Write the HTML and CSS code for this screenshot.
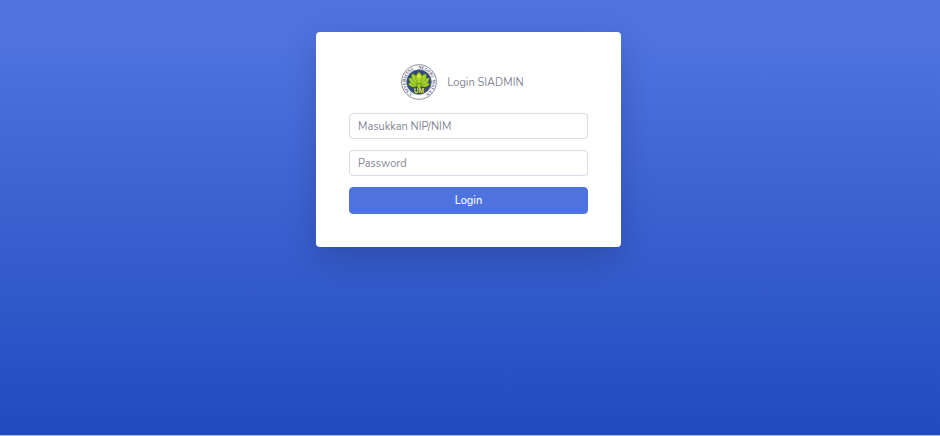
FILE: index.html
```html
<!DOCTYPE html>
<html lang="id">
<head>
<meta charset="utf-8">
<meta name="viewport" content="width=device-width, initial-scale=1">
<title>Login SIADMIN</title>
<link rel="stylesheet" href="styles.css">
</head>
<body>
<main class="card">
  <header class="brand">
    <svg class="logo" viewBox="0 0 108 108" aria-hidden="true">
      <defs><path id="ring" d="M34 89A40 40 0 1 1 74 89"/></defs>
      <circle cx="54" cy="54" r="52" fill="#fff" stroke="#73798a" stroke-width="2.5"/>
      <text class="seal"><textPath href="#ring" startOffset="0">UNIVERSITAS</textPath></text>
      <text class="seal"><textPath href="#ring" startOffset="102">NEGERI</textPath></text>
      <text class="seal"><textPath href="#ring" startOffset="160">MALANG</textPath></text>
      <circle cx="54" cy="54" r="37" fill="#344a78" stroke="#53617e" stroke-width="2"/>
      <g fill="#a9d52b" stroke="#53751f" stroke-width="1.5">
        <path d="M49 66C39 72 27 69 22 59C31 53 42 55 50 63Z"/>
        <path d="M59 66C69 72 81 69 86 59C77 53 66 55 58 63Z"/>
        <path d="M50 63C35 65 24 54 23 43C37 39 48 48 53 62Z"/>
        <path d="M58 63C73 65 84 54 85 43C71 39 60 48 55 62Z"/>
        <path d="M52 61C35 55 29 42 33 29C47 32 54 44 54 59Z"/>
        <path d="M56 61C73 55 79 42 75 29C61 32 54 44 54 59Z"/>
        <path d="M54 61C41 48 41 34 54 24C67 34 67 48 54 61Z"/>
        <path d="M47 60H61L58 73H50Z"/>
      </g>
      <circle cx="54" cy="37" r="5" fill="#e5ed39"/>
      <text class="monogram" x="54" y="87">UM</text>
    </svg>
    <h1 class="title">Login SIADMIN</h1>
  </header>
  <form class="form">
    <input class="field" type="text" placeholder="Masukkan NIP/NIM" aria-label="Masukkan NIP/NIM">
    <input class="field" type="password" placeholder="Password" aria-label="Password">
    <button class="submit" type="submit">Login</button>
  </form>
</main>
</body>
</html>
```
FILE: styles.css
```css
* {
  box-sizing: border-box;
}

body {
  margin: 0;
  min-height: 100vh;
  padding: 32px 19px 32px 16px;
  border-bottom: 1px solid #a3b7f0;
  background: linear-gradient(180deg, #4e73df 10%, #224abe 100%);
  font-family: Nunito, "Open Sans", sans-serif;
  font-size: 11px;
  color: #858796;
}

.card {
  max-width: 305px;
  margin: 0 auto;
  padding: 32px 33px 33px;
  border-radius: 4px;
  background: #fff;
  box-shadow: 0 11px 33px rgba(0, 0, 0, 0.175);
}

.brand {
  display: flex;
  align-items: center;
  justify-content: center;
  gap: 10px;
  margin-bottom: 13px;
  padding-right: 12px;
}

.logo {
  width: 36px;
  height: 36px;
}

.seal {
  font: bold 13px "Liberation Serif", serif;
  fill: #555a6c;
}

.monogram {
  font: bold 19px "Liberation Sans", sans-serif;
  text-anchor: middle;
  fill: #e5ed4a;
}

.title {
  margin: 0;
  font-size: 11px;
  font-weight: 400;
}

.form {
  display: grid;
  gap: 11px;
}

.field,
.submit {
  width: 100%;
  height: 26px;
  border-radius: 4px;
  font-family: inherit;
  font-size: 11px;
}

.field {
  padding: 0 8px;
  border: 1px solid #d9dbe6;
  background: #fff;
  color: #6e707e;
}

.field::placeholder {
  color: #858796;
  opacity: 1;
}

.submit {
  height: 27px;
  border: 1px solid #4e73df;
  background: #4e73df;
  color: #fff;
  font-weight: 500;
}
```
